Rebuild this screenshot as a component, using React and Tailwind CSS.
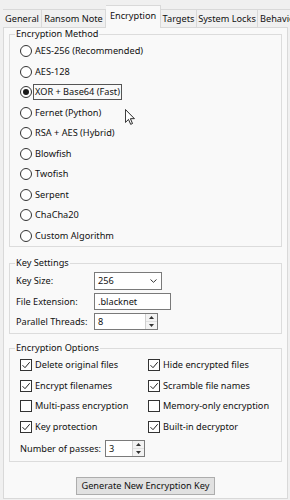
import React from "react";

function Radio({ label, checked, focus }) {
  return (
    <div className="flex h-[20.5px] items-center">
      <span className="flex h-[12px] w-[12px] items-center justify-center rounded-full border border-[#333] bg-white">
        {checked && <span className="h-[6px] w-[6px] rounded-full bg-[#1a1a1a]" />}
      </span>
      <span className={"ml-[1px] px-[1px] leading-[14px] " + (focus ? "border border-[#555]" : "border border-transparent")}>{label}</span>
    </div>
  );
}

function Check({ label, checked }) {
  return (
    <div className="flex h-[20.5px] items-center">
      <span className="flex h-[12px] w-[12px] items-center justify-center border border-[#333] bg-white">
        {checked && (
          <svg width="10" height="10" viewBox="0 0 10 10">
            <path d="M1.5 5.2 L4 7.7 L8.7 2.2" fill="none" stroke="#222" strokeWidth="1" />
          </svg>
        )}
      </span>
      <span className="ml-[3px] whitespace-nowrap">{label}</span>
    </div>
  );
}

function Spin({ value, w }) {
  return (
    <div className={"flex h-[17px] items-stretch border border-[#7a7a7a] bg-white " + w}>
      <span className="flex-1 pl-[3px] leading-[15px]">{value}</span>
      <span className="flex w-[12px] flex-col border-l border-[#d0d0d0] bg-[#f3f3f3]">
        <span className="flex flex-1 items-center justify-center">
          <svg width="5" height="3" viewBox="0 0 5 3"><path d="M0 3 L2.5 0 L5 3 Z" fill="#333" /></svg>
        </span>
        <span className="flex flex-1 items-center justify-center border-t border-[#e0e0e0]">
          <svg width="5" height="3" viewBox="0 0 5 3"><path d="M0 0 L2.5 3 L5 0 Z" fill="#333" /></svg>
        </span>
      </span>
    </div>
  );
}

export default function App() {
  const methods = [
    "AES-256 (Recommended)",
    "AES-128",
    "XOR + Base64 (Fast)",
    "Fernet (Python)",
    "RSA + AES (Hybrid)",
    "Blowfish",
    "Twofish",
    "Serpent",
    "ChaCha20",
    "Custom Algorithm",
  ];
  const tab = "flex h-[18px] shrink-0 items-center justify-center whitespace-nowrap border border-b-0 border-l-0 border-[#d9d9d9] bg-[#f0f0f0]";
  return (
    <div
      className="relative h-[500px] w-[290px] overflow-hidden bg-[#f0f0f0] text-[9.2px] text-[#111]"
      style={{ fontFamily: '"Noto Sans", sans-serif' }}
    >
      {/* tabs */}
      <div className="flex h-[27px] items-end pl-[3px]">
        <div className={tab + " w-[39px] border-l"}>General</div>
        <div className={tab + " w-[64px]"}>Ransom Note</div>
        <div className="relative z-10 -mb-px flex h-[23px] w-[55px] shrink-0 items-center justify-center whitespace-nowrap border border-b-0 border-l-0 border-[#d9d9d9] bg-[#f9f9f9] pb-[2px]">Encryption</div>
        <div className={tab + " w-[36px]"}>Targets</div>
        <div className={tab + " w-[61px]"}>System Locks</div>
        <div className={tab + " w-[50px] justify-start overflow-hidden pl-[2px]"}>Behavior</div>
      </div>

      {/* panel */}
      <div className="ml-[3px] h-[472px] w-[285px] border border-[#d9d9d9] bg-[#f9f9f9] pl-[5px] pr-[5px]">
        <fieldset className="border border-[#dcdcdc] pb-[0px] pl-[10px]">
          <legend className="-ml-[5px] px-[1px] leading-[12px]">Encryption Method</legend>
          <div className="pt-[1px]">
            {methods.map((m, i) => (
              <Radio key={m} label={m} checked={i === 2} focus={i === 2} />
            ))}
          </div>
        </fieldset>

        <fieldset className="mt-[10px] border border-[#dcdcdc] pb-[3px] pl-[6px]">
          <legend className="-ml-[1px] px-[1px] leading-[12px]">Key Settings</legend>
          <div className="flex flex-col gap-[3px] pt-[3px]">
            <div className="flex h-[18px] items-center">
              <span className="w-[78px]">Key Size:</span>
              <div className="flex h-[18px] w-[68px] items-center justify-between border border-[#7a7a7a] bg-white pl-[3px] pr-[4px]">
                <span>256</span>
                <svg width="7" height="4" viewBox="0 0 7 4"><path d="M0.5 0.5 L3.5 3.3 L6.5 0.5" fill="none" stroke="#333" strokeWidth="1" /></svg>
              </div>
            </div>
            <div className="flex h-[17px] items-center">
              <span className="w-[78px]">File Extension:</span>
              <div className="flex h-[17px] w-[77px] items-center border border-[#7a7a7a] bg-white pl-[3px]">.blacknet</div>
            </div>
            <div className="flex h-[17px] items-center">
              <span className="w-[78px]">Parallel Threads:</span>
              <Spin value="8" w="w-[64px]" />
            </div>
          </div>
        </fieldset>

        <fieldset className="mt-[8px] border border-[#dcdcdc] pb-[4px] pl-[10px]">
          <legend className="-ml-[5px] px-[1px] leading-[12px]">Encryption Options</legend>
          <div className="grid grid-cols-[128px_1fr] pt-[1px]">
            <Check label="Delete original files" checked />
            <Check label="Hide encrypted files" checked />
            <Check label="Encrypt filenames" checked />
            <Check label="Scramble file names" checked />
            <Check label="Multi-pass encryption" />
            <Check label="Memory-only encryption" />
            <Check label="Key protection" checked />
            <Check label="Built-in decryptor" checked />
          </div>
          <div className="mt-[3px] flex items-center">
            <span className="mr-[4px]">Number of passes:</span>
            <Spin value="3" w="w-[40px]" />
          </div>
        </fieldset>

        <div className="mt-[15px] flex justify-center">
          <div className="flex h-[18px] items-center border border-[#adadad] bg-[#e1e1e1] px-[5px]">Generate New Encryption Key</div>
        </div>
      </div>

      {/* mouse cursor */}
      <svg className="absolute left-[125px] top-[109px]" width="10" height="16" viewBox="0 0 12 19">
        <path d="M0.5 0.5 L0.5 16 L4.2 12.4 L6.8 18.3 L9 17.3 L6.5 11.5 L11.3 11.5 Z" fill="#fff" stroke="#000" strokeWidth="1" strokeLinejoin="round" />
      </svg>
    </div>
  );
}
